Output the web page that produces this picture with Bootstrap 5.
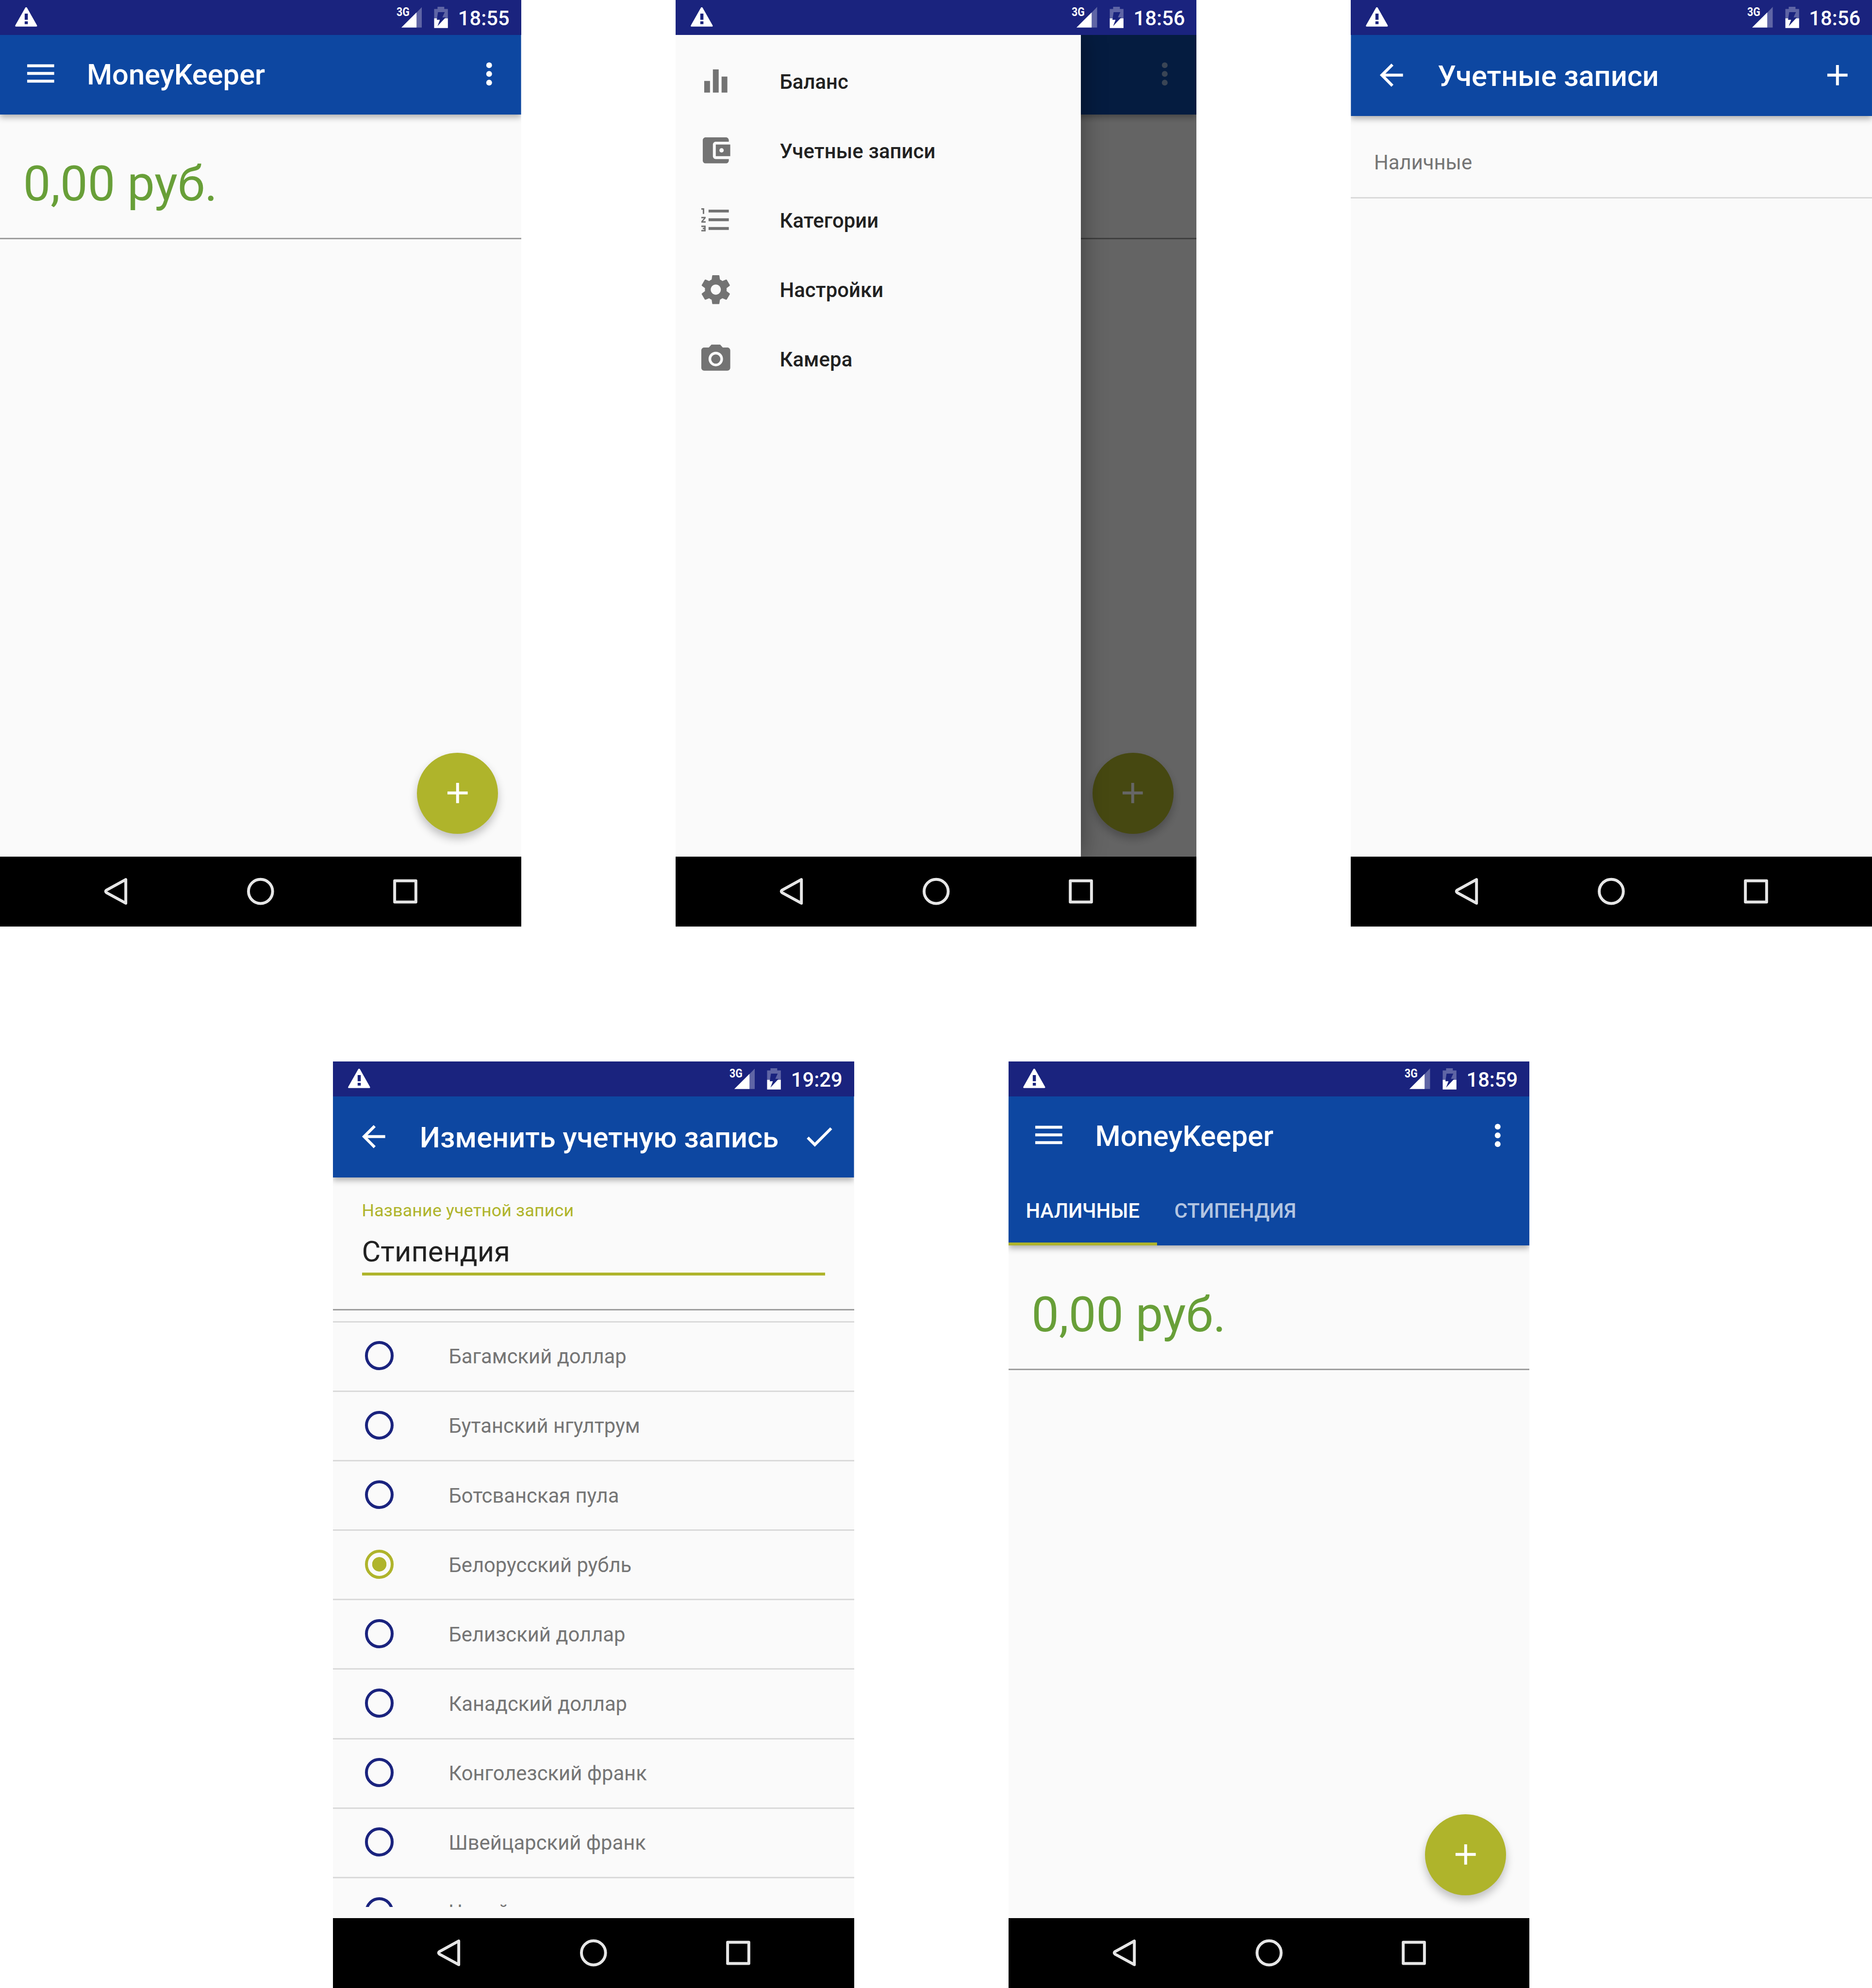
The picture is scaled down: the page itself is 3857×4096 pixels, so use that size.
<!DOCTYPE html>
<html lang="ru">
<head>
<meta charset="utf-8">
<meta name="viewport" content="width=device-width, initial-scale=1">
<title>MoneyKeeper</title>
<link href="https://cdn.jsdelivr.net/npm/bootstrap@5.3.0/dist/css/bootstrap.min.css" rel="stylesheet">
<style>
  /* 1rem = 100 device pixels of a 3880px wide sheet */
  html { font-size: calc(100vw / 38.8); }
  body { font-family: Roboto, sans-serif; font-size: .42rem; line-height: 1.2; background: #fff; overflow: hidden; }
  svg { display: block; flex: none; }
  .sheet { width: 38.8rem; height: 41.2rem; }
  .shots-top { gap: 3.2rem; }
  .shots-bottom { gap: 3.2rem; padding-left: 6.9rem; margin-top: 2.8rem; }
  .phone { width: 10.8rem; height: 19.2rem; background: #fafafa; flex: none; }
  .status { height: .72rem; background: #1a237e; color: #fff; padding: 0 .24rem 0 .3rem; flex: none; }
  .warn { width: .48rem; height: .48rem; }
  .signal { width: .54rem; height: .46rem; }
  .battery { width: .3rem; height: .46rem; margin: 0 .2rem 0 .25rem; }
  .clock { font-size: .42rem; font-weight: 500; line-height: .72rem; padding-top: .04rem; }
  .appbar { background: #0d47a1; color: #fff; box-shadow: 0 .06rem .12rem rgba(0,0,0,.3); flex: none; z-index: 1; clip-path: inset(0 0 -.4rem 0); }
  .bar-row { height: 1.65rem; padding: 0 .3rem 0 .48rem; }
  .bar-row.tall { height: 1.68rem; }
  .bar-row.action { padding-right: .36rem; }
  .bar-title { font-size: .6rem; font-weight: 500; line-height: .7rem; margin-left: .6rem; padding-top: .02rem; white-space: nowrap; }
  .tall .bar-title { padding-top: .05rem; }
  .ico { width: .72rem; height: .72rem; }
  .tab-row { height: 1.44rem; font-weight: 500; }
  .tab-row .tab-item { padding: .08rem .36rem 0; border-bottom: 6px solid transparent; color: rgba(255,255,255,.7); }
  .tab-row .tab-item.on { color: #fff; border-color: #afb42b; }
  .balance { height: 2.59rem; border-bottom: 3px solid #9e9e9e; padding: .34rem .48rem 0; font-size: 1.013rem; color: #689f38; flex: none; }
  .fab { right: .48rem; bottom: .48rem; width: 1.68rem; height: 1.68rem; background: #afb42b; box-shadow: 0 .1rem .18rem rgba(0,0,0,.24); }
  .sysnav { height: 1.44rem; background: #000; flex: none; }
  .scrim { inset: 0; background: rgba(0,0,0,.6); z-index: 2; }
  .drawer { top: 0; bottom: 0; left: 0; width: 8.4rem; background: #fafafa; padding-top: .24rem; z-index: 3; box-shadow: 0 0 .48rem rgba(0,0,0,.4); }
  .menu-item { height: 1.44rem; padding-left: .48rem; font-weight: 500; color: #212121; letter-spacing: .0015rem; }
  .menu-item svg { margin-right: .96rem; fill: #737373; }
  .menu-item span { padding-top: .04rem; }
  .account { height: 1.71rem; padding: .24rem .48rem 0; color: #757575; border-bottom: 3px solid #dadada; }
  .account span { padding-top: .03rem; }
  .form-area { height: 2.76rem; padding: .49rem .6rem 0; border-bottom: 3px solid #9e9e9e; flex: none; }
  .f-label { font-size: .36rem; line-height: .42rem; color: #afb42b; letter-spacing: .0015rem; }
  .f-value { font-size: .6rem; line-height: .7rem; height: 1.05rem; margin-top: .08rem; padding-top: .21rem; color: #212121; border-bottom: 6px solid #afb42b; white-space: nowrap; }
  .currencies { margin-top: .22rem; margin-bottom: .24rem; min-height: 0; color: #757575; }
  .cur { height: 1.44rem; border-top: 3px solid #dadada; padding-left: .66rem; flex: none; }
  .cur span { padding-top: .01rem; }
  .cur .dot { width: .6rem; height: .6rem; border: 6px solid #1a237e; border-radius: 50%; margin-right: 1.14rem; margin-top: -.03rem; }
  .cur .dot.on { border-color: #afb42b; background: radial-gradient(circle, #afb42b .145rem, transparent .152rem); }
</style>
</head>
<body>
<svg width="0" height="0" class="position-absolute">
  <defs>
    <symbol id="warn" viewBox="0 0 48 48"><path fill="#fff" fill-rule="evenodd" d="M24 3C25 3 25.600 3.600 26 4.200L46.500 40.500C47.300 42 46.600 43 45 43H3C1.400 43 .7 42 1.500 40.500L22 4.200C22.400 3.600 23 3 24 3ZM21 16V29H27.500V16ZM21 32.300V38H27.500V32.300Z"/></symbol>
    <symbol id="signal" viewBox="0 0 54 46"><path fill="#fff" fill-opacity=".3" d="M54 1V44H42.500V13Z"/><path fill="#fff" d="M11 44L42.500 12.500V44Z"/><text x="1" y="20.500" fill="#fff" font-family="Roboto, sans-serif" font-size="26.500" font-weight="700" textLength="27" lengthAdjust="spacingAndGlyphs">3G</text></symbol>
    <symbol id="battery" viewBox="0 0 30 46"><path fill="#fff" fill-opacity=".3" d="M7.500 1H21.500V5.500H29V25H.5V5.500H7.500Z"/><path fill="#fff" d="M.5 25H29V45H.5Z"/><path fill="#1a237e" d="M8.500 12H22.500L17.500 23H24.500L7.500 41L12.500 28H6Z"/></symbol>
    <symbol id="back" viewBox="0 0 24 24"><path d="M20 11H7.830l5.590-5.590L12 4l-8 8 8 8 1.410-1.410L7.830 13H20v-2z"/></symbol>
    <symbol id="plus" viewBox="0 0 24 24"><path d="M19 13h-6v6h-2v-6H5v-2h6V5h2v6h6v2z"/></symbol>
    <symbol id="done" viewBox="0 0 24 24"><path d="M9 16.200L4.800 12l-1.400 1.400L9 19 21 7l-1.400-1.400L9 16.200z"/></symbol>
    <symbol id="burger" viewBox="0 0 72 72"><path d="M8 14.500h56v6H8zM8 30.500h56v6H8zM8 46.500h56v6H8z"/></symbol>
    <symbol id="more" viewBox="0 0 72 72"><circle cx="36" cy="16.500" r="6"/><circle cx="36" cy="34.500" r="6"/><circle cx="36" cy="52.500" r="6"/></symbol>
    <symbol id="chart" viewBox="0 0 24 24"><path d="M10 20h4V4h-4v16zm-6 0h4v-8H4v8zM16 9v11h4V9h-4z"/></symbol>
    <symbol id="wallet" viewBox="0 0 24 24"><path d="M21 18v1c0 1.100-.9 2-2 2H5c-1.110 0-2-.9-2-2V5c0-1.100.89-2 2-2h14c1.100 0 2 .9 2 2v1h-9c-1.110 0-2 .9-2 2v8c0 1.100.89 2 2 2h9zm-9-2h10V8H12v8zm4-2.500c-.83 0-1.500-.67-1.500-1.500s.67-1.500 1.500-1.500 1.500.67 1.500 1.500-.67 1.500-1.500 1.500z"/></symbol>
    <symbol id="numlist" viewBox="0 0 24 24"><path d="M2 17h2v.5H3v1h1v.5H2v1h3v-4H2v1zm1-9h1V4H2v1h1v3zm-1 3h1.800L2 13.100v.9h3v-1H3.200L5 10.900V10H2v1zm5-6v2h14V5H7zm0 14h14v-2H7v2zm0-6h14v-2H7v2z"/></symbol>
    <symbol id="gear" viewBox="0 0 24 24"><path d="M19.430 12.980c.04-.32.07-.64.07-.98s-.03-.66-.07-.98l2.110-1.650c.19-.15.24-.42.12-.64l-2-3.460c-.12-.22-.39-.3-.61-.22l-2.490 1c-.52-.4-1.080-.73-1.690-.98l-.38-2.650C14.460 2.180 14.250 2 14 2h-4c-.25 0-.46.18-.49.42l-.38 2.650c-.61.25-1.170.59-1.690.98l-2.490-1c-.23-.09-.49 0-.61.22l-2 3.460c-.13.22-.07.49.12.64l2.110 1.650c-.04.32-.07.65-.07.98s.03.66.07.98l-2.110 1.650c-.19.15-.24.42-.12.64l2 3.460c.12.22.39.3.61.22l2.490-1c.52.4 1.080.73 1.690.98l.38 2.650c.03.24.24.42.49.42h4c.25 0 .46-.18.49-.42l.38-2.650c.61-.25 1.170-.59 1.690-.98l2.490 1c.23.09.49 0 .61-.22l2-3.460c.12-.22.07-.49-.12-.64l-2.110-1.650zM12 15.500c-1.930 0-3.500-1.570-3.500-3.500s1.570-3.500 3.500-3.500 3.500 1.570 3.500 3.500-1.570 3.500-3.500 3.500z"/></symbol>
    <symbol id="camera" viewBox="0 0 24 24"><circle cx="12" cy="12" r="3.200"/><path d="M9 2L7.170 4H4c-1.100 0-2 .9-2 2v12c0 1.100.9 2 2 2h16c1.100 0 2-.9 2-2V6c0-1.100-.9-2-2-2h-3.170L15 2H9zm3 15c-2.760 0-5-2.240-5-5s2.240-5 5-5 5 2.240 5 5-2.240 5-5 5z"/></symbol>
    <symbol id="sys" viewBox="0 0 1080 144"><g fill="none" stroke="#e6e6e6" stroke-width="6" stroke-linejoin="round"><path d="M260.700 47.500V96.500L220.500 74.500Q217.500 72 220.500 69.500Z"/><circle cx="540" cy="72" r="25"/><rect x="818" y="50" width="44" height="44"/></g></symbol>
  </defs>
</svg>

<main class="sheet">
  <div class="shots-top d-flex">

    <section class="phone d-flex flex-column">
      <div class="status d-flex align-items-center"><svg class="warn"><use href="#warn"/></svg><svg class="signal ms-auto"><use href="#signal"/></svg><svg class="battery"><use href="#battery"/></svg><span class="clock">18:55</span></div>
      <div class="appbar"><div class="bar-row d-flex align-items-center"><svg class="ico" fill="#fff"><use href="#burger"/></svg><span class="bar-title">MoneyKeeper</span><svg class="ico ms-auto" fill="#fff"><use href="#more"/></svg></div></div>
      <div class="flex-grow-1 position-relative">
        <div class="balance d-flex align-items-center">0,00 руб.</div>
        <div class="fab position-absolute rounded-circle d-flex align-items-center justify-content-center"><svg class="ico" fill="#fff"><use href="#plus"/></svg></div>
      </div>
      <div class="sysnav"><svg width="100%" height="100%"><use href="#sys"/></svg></div>
    </section>

    <section class="phone d-flex flex-column">
      <div class="status d-flex align-items-center"><svg class="warn"><use href="#warn"/></svg><svg class="signal ms-auto"><use href="#signal"/></svg><svg class="battery"><use href="#battery"/></svg><span class="clock">18:56</span></div>
      <div class="flex-grow-1 position-relative d-flex flex-column overflow-hidden">
        <div class="appbar"><div class="bar-row d-flex align-items-center"><svg class="ico ms-auto" fill="#fff" fill-opacity=".55"><use href="#more"/></svg></div></div>
        <div class="balance"></div>
        <div class="fab position-absolute rounded-circle d-flex align-items-center justify-content-center"><svg class="ico" fill="#fff"><use href="#plus"/></svg></div>
        <div class="scrim position-absolute"></div>
        <nav class="drawer position-absolute">
          <div class="menu-item d-flex align-items-center"><svg class="ico"><use href="#chart"/></svg><span>Баланс</span></div>
          <div class="menu-item d-flex align-items-center"><svg class="ico"><use href="#wallet"/></svg><span>Учетные записи</span></div>
          <div class="menu-item d-flex align-items-center"><svg class="ico"><use href="#numlist"/></svg><span>Категории</span></div>
          <div class="menu-item d-flex align-items-center"><svg class="ico"><use href="#gear"/></svg><span>Настройки</span></div>
          <div class="menu-item d-flex align-items-center"><svg class="ico"><use href="#camera"/></svg><span>Камера</span></div>
        </nav>
      </div>
      <div class="sysnav"><svg width="100%" height="100%"><use href="#sys"/></svg></div>
    </section>

    <section class="phone d-flex flex-column">
      <div class="status d-flex align-items-center"><svg class="warn"><use href="#warn"/></svg><svg class="signal ms-auto"><use href="#signal"/></svg><svg class="battery"><use href="#battery"/></svg><span class="clock">18:56</span></div>
      <div class="appbar"><div class="bar-row tall action d-flex align-items-center"><svg class="ico" fill="#fff"><use href="#back"/></svg><span class="bar-title">Учетные записи</span><svg class="ico ms-auto" fill="#fff"><use href="#plus"/></svg></div></div>
      <div class="flex-grow-1"><div class="account d-flex align-items-center"><span>Наличные</span></div></div>
      <div class="sysnav"><svg width="100%" height="100%"><use href="#sys"/></svg></div>
    </section>
  </div>

  <div class="shots-bottom d-flex">
    <section class="phone d-flex flex-column">
      <div class="status d-flex align-items-center"><svg class="warn"><use href="#warn"/></svg><svg class="signal ms-auto"><use href="#signal"/></svg><svg class="battery"><use href="#battery"/></svg><span class="clock">19:29</span></div>
      <div class="appbar"><div class="bar-row tall action d-flex align-items-center"><svg class="ico" fill="#fff"><use href="#back"/></svg><span class="bar-title">Изменить учетную запись</span><svg class="ico ms-auto" fill="#fff"><use href="#done"/></svg></div></div>
      <div class="form-area">
        <div class="f-label">Название учетной записи</div>
        <div class="f-value">Стипендия</div>
      </div>
      <div class="currencies flex-grow-1 overflow-hidden d-flex flex-column">
        <div class="cur d-flex align-items-center"><i class="dot"></i><span>Багамский доллар</span></div>
        <div class="cur d-flex align-items-center"><i class="dot"></i><span>Бутанский нгултрум</span></div>
        <div class="cur d-flex align-items-center"><i class="dot"></i><span>Ботсванская пула</span></div>
        <div class="cur d-flex align-items-center"><i class="dot on"></i><span>Белорусский рубль</span></div>
        <div class="cur d-flex align-items-center"><i class="dot"></i><span>Белизский доллар</span></div>
        <div class="cur d-flex align-items-center"><i class="dot"></i><span>Канадский доллар</span></div>
        <div class="cur d-flex align-items-center"><i class="dot"></i><span>Конголезский франк</span></div>
        <div class="cur d-flex align-items-center"><i class="dot"></i><span>Швейцарский франк</span></div>
        <div class="cur d-flex align-items-center"><i class="dot"></i><span>Чилийское песо</span></div>
      </div>
      <div class="sysnav"><svg width="100%" height="100%"><use href="#sys"/></svg></div>
    </section>

    <section class="phone d-flex flex-column">
      <div class="status d-flex align-items-center"><svg class="warn"><use href="#warn"/></svg><svg class="signal ms-auto"><use href="#signal"/></svg><svg class="battery"><use href="#battery"/></svg><span class="clock">18:59</span></div>
      <div class="appbar">
        <div class="bar-row d-flex align-items-center"><svg class="ico" fill="#fff"><use href="#burger"/></svg><span class="bar-title">MoneyKeeper</span><svg class="ico ms-auto" fill="#fff"><use href="#more"/></svg></div>
        <div class="tab-row d-flex"><div class="tab-item on d-flex align-items-center">НАЛИЧНЫЕ</div><div class="tab-item d-flex align-items-center">СТИПЕНДИЯ</div></div>
      </div>
      <div class="flex-grow-1 position-relative">
        <div class="balance d-flex align-items-center">0,00 руб.</div>
        <div class="fab position-absolute rounded-circle d-flex align-items-center justify-content-center"><svg class="ico" fill="#fff"><use href="#plus"/></svg></div>
      </div>
      <div class="sysnav"><svg width="100%" height="100%"><use href="#sys"/></svg></div>
    </section>
  </div>
</main>
<script src="https://cdn.jsdelivr.net/npm/bootstrap@5.3.0/dist/js/bootstrap.bundle.min.js"></script>
</body>
</html>
